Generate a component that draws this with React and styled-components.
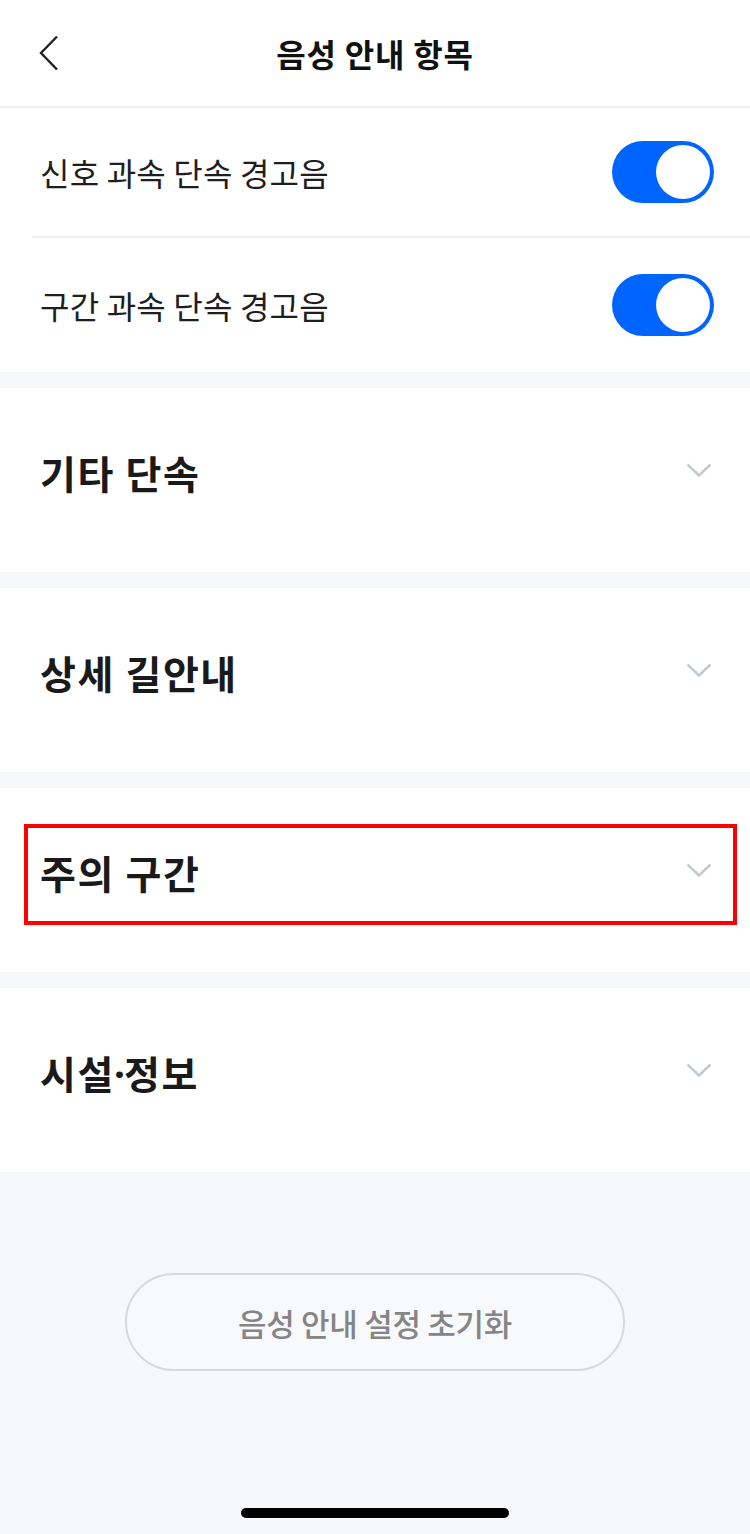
import React from "react";
import styled, { createGlobalStyle } from "styled-components";

const Global = createGlobalStyle`
  html, body { margin: 0; padding: 0; }
  body {
    background: #f7f8fa;
    font-family: "Noto Sans CJK KR", "Noto Sans", sans-serif;
    color: #1c1c1c;
  }
  * { box-sizing: border-box; }
`;

const Page = styled.div`
  width: 750px;
  min-height: 1534px;
  display: flex;
  flex-direction: column;
  background: #f7f8fa;
`;

const Header = styled.header`
  height: 108px;
  background: #fff;
  border-bottom: 2px solid #eef0f3;
  display: grid;
  grid-template-columns: 120px 1fr 120px;
  align-items: center;
`;

const BackButton = styled.button`
  border: 0;
  background: none;
  padding: 0 0 0 38px;
  height: 40px;
  display: flex;
  align-items: center;
  cursor: pointer;
`;

const Title = styled.h1`
  margin: 0;
  text-align: center;
  font-size: 32px;
  font-weight: 700;
  color: #111;
  letter-spacing: 0.8px;
`;

const Group = styled.section`
  background: #fff;
  display: flex;
  flex-direction: column;
`;

const ToggleRow = styled.div`
  height: ${(p) => (p.$tall ? 134 : 128)}px;
  padding: 0 36px 0 40px;
  display: flex;
  align-items: center;
  justify-content: space-between;
`;

const RowLabel = styled.span`
  font-size: 32px;
  font-weight: 400;
  color: #1e1e1e;
  letter-spacing: 0.2px;
`;

const Divider = styled.div`
  height: 2px;
  margin-left: 32px;
  background: #eef0f3;
`;

const Switch = styled.div`
  width: 102px;
  height: 62px;
  border-radius: 31px;
  background: ${(p) => (p.$on ? "#0064ff" : "#d5d9de")};
  padding: 4px;
  display: flex;
  justify-content: ${(p) => (p.$on ? "flex-end" : "flex-start")};
`;

const Knob = styled.div`
  width: 54px;
  height: 54px;
  border-radius: 50%;
  background: #fff;
`;

const Section = styled.section`
  position: relative;
  margin-top: 16px;
  background: #fff;
  padding: 36px 38px 47px 40px;
`;

const SectionHead = styled.div`
  height: 101px;
  display: flex;
  align-items: center;
  justify-content: space-between;
`;

const SectionTitle = styled.h2`
  margin: 0 0 5px;
  font-size: 39px;
  font-weight: 700;
  color: #1a1a1a;
  letter-spacing: 1.6px;
`;

const Dot = styled.span`
  font-family: "Noto Sans", "DejaVu Sans", sans-serif;
  letter-spacing: 0;
  margin: 0 -1px;
`;

const ChevronWrap = styled.span`
  display: flex;
  margin-bottom: 8px;
`;

const Highlight = styled.div`
  position: absolute;
  left: 24px;
  top: 36px;
  width: 713px;
  height: 101px;
  border: 4px solid #ff0000;
  pointer-events: none;
`;

const Footer = styled.div`
  flex: 1;
  display: flex;
  flex-direction: column;
  align-items: center;
  padding-top: 101px;
`;

const ResetButton = styled.button`
  width: 500px;
  height: 98px;
  border-radius: 49px;
  border: 2px solid #d9d9d9;
  background: #f8f9fb;
  font-family: "Noto Sans CJK KR", "Noto Sans", sans-serif;
  font-size: 31px;
  font-weight: 500;
  color: #858585;
  letter-spacing: -0.3px;
  cursor: pointer;
`;

const HomeIndicator = styled.div`
  width: 268px;
  height: 10px;
  border-radius: 5px;
  background: #000;
  margin-top: auto;
  margin-bottom: 16px;
`;

const BackIcon = () => (
  <svg width="20" height="36" viewBox="0 0 20 36" fill="none">
    <path d="M19 1.5 L3 18 L19 34.5" stroke="#222" strokeWidth="2.4" strokeLinecap="butt" strokeLinejoin="miter" />
  </svg>
);

const ChevronDown = () => (
  <svg width="26" height="15" viewBox="0 0 26 15" fill="none">
    <path d="M1.5 1.5 L13 12.5 L24.5 1.5" stroke="#c5cbd3" strokeWidth="2.6" />
  </svg>
);

const toggles = [
  { label: "신호 과속 단속 경고음", on: true },
  { label: "구간 과속 단속 경고음", on: true },
];

const sections = [
  { title: ["기타 단속"] },
  { title: ["상세 길안내"] },
  { title: ["주의 구간"], highlight: true },
  { title: ["시설", "정보"] },
];

export default function App() {
  return (
    <>
      <Global />
      <Page>
        <Header>
          <BackButton aria-label="뒤로">
            <BackIcon />
          </BackButton>
          <Title>음성 안내 항목</Title>
          <span />
        </Header>
        <Group>
          {toggles.map((t, i) => (
            <React.Fragment key={t.label}>
              {i > 0 && <Divider />}
              <ToggleRow $tall={i === toggles.length - 1}>
                <RowLabel>{t.label}</RowLabel>
                <Switch $on={t.on}>
                  <Knob />
                </Switch>
              </ToggleRow>
            </React.Fragment>
          ))}
        </Group>
        {sections.map((s) => (
          <Section key={s.title.join("·")}>
            <SectionHead>
              <SectionTitle>
                {s.title.map((part, i) => (
                  <React.Fragment key={part}>
                    {i > 0 && <Dot>·</Dot>}
                    {part}
                  </React.Fragment>
                ))}
              </SectionTitle>
              <ChevronWrap>
                <ChevronDown />
              </ChevronWrap>
            </SectionHead>
            {s.highlight && <Highlight />}
          </Section>
        ))}
        <Footer>
          <ResetButton>음성 안내 설정 초기화</ResetButton>
          <HomeIndicator />
        </Footer>
      </Page>
    </>
  );
}
